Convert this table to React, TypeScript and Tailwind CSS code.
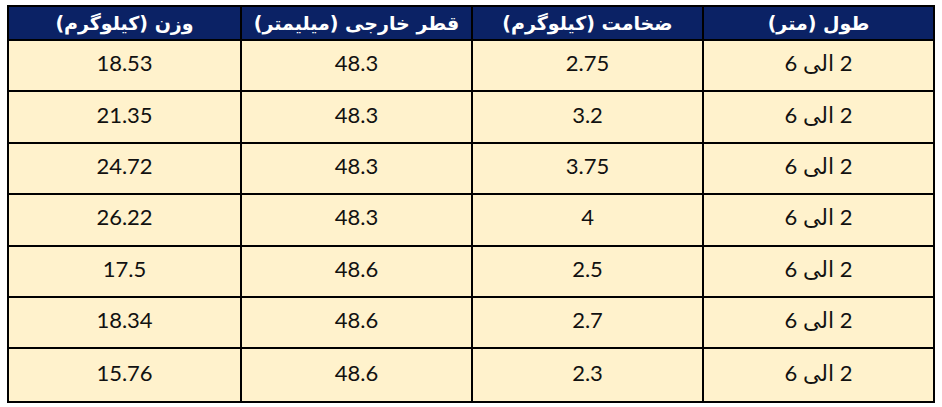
const headers = ['طول (متر)', 'ضخامت (کیلوگرم)', 'قطر خارجی (میلیمتر)', 'وزن (کیلوگرم)']

const rows = [
  ['2 الی 6', '2.75', '48.3', '18.53'],
  ['2 الی 6', '3.2', '48.3', '21.35'],
  ['2 الی 6', '3.75', '48.3', '24.72'],
  ['2 الی 6', '4', '48.3', '26.22'],
  ['2 الی 6', '2.5', '48.6', '17.5'],
  ['2 الی 6', '2.7', '48.6', '18.34'],
  ['2 الی 6', '2.3', '48.6', '15.76'],
]

export default function App() {
  return (
    <div className="w-[942px] h-[407px] bg-white pt-[5px] pl-[7px]">
      <div
        dir="rtl"
        className="w-[928px] border-2 border-black"
        style={{ fontFamily: '"Lato", "DejaVu Sans", sans-serif' }}
      >
        {/* Header */}
        <div className="grid grid-cols-4 h-[34px] bg-[#0b2265] border-b-2 border-black">
          {headers.map((h, i) => (
            <div
              key={h}
              className={`flex items-center justify-center text-white font-bold text-[19px] ${i < 3 ? 'border-l-2 border-black' : ''}`}
              style={{ fontFamily: '"DejaVu Sans", sans-serif' }}
            >
              {h}
            </div>
          ))}
        </div>

        {/* Body */}
        {rows.map((row, r) => (
          <div
            key={r}
            className={`grid grid-cols-4 h-[51.4px] bg-[#fff2cc] ${r < rows.length - 1 ? 'border-b-2 border-black' : ''}`}
          >
            {row.map((cell, i) => (
              <div
                key={i}
                className={`flex items-center justify-center pb-[6px] text-[22px] text-[#111] ${i < 3 ? 'border-l-2 border-black' : ''}`}
              >
                {cell}
              </div>
            ))}
          </div>
        ))}
      </div>
    </div>
  )
}
